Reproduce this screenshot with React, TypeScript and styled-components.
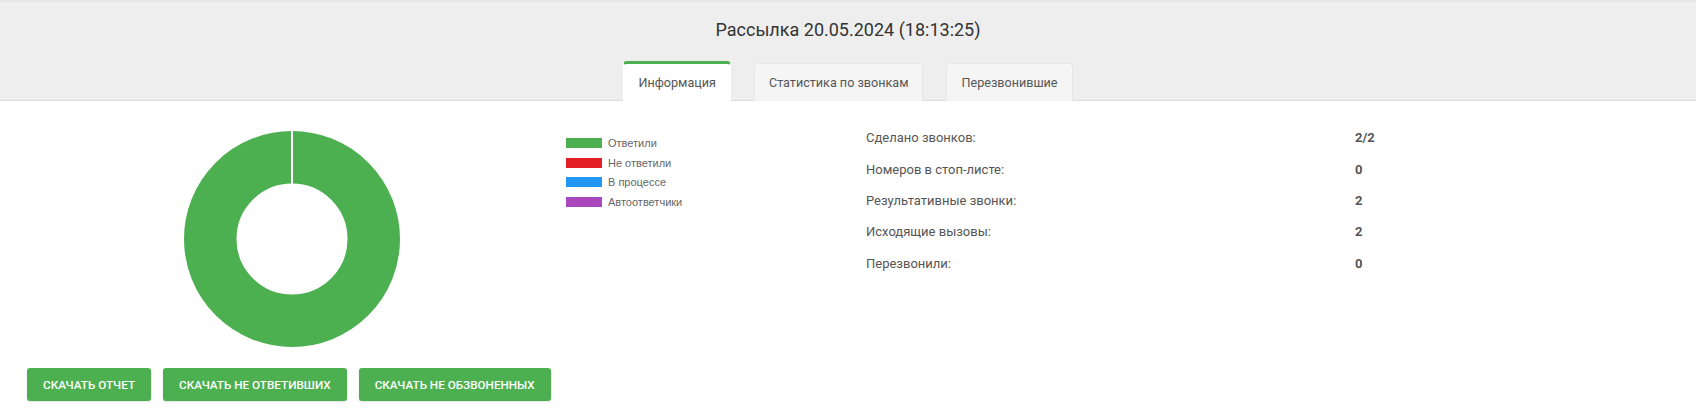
import React from "react";
import styled, { createGlobalStyle } from "styled-components";

const GlobalStyle = createGlobalStyle`
  html, body { margin: 0; padding: 0; background: #ffffff; }
  body { font-family: Roboto, "Noto Sans", Arial, sans-serif; color: #333; }
  * { box-sizing: border-box; }
`;

const Page = styled.div`
  width: 1696px;
  min-height: 410px;
  background: #fff;
`;

const Header = styled.header`
  background: #eeeeee;
  border-top: 2px solid #e6e6e6;
  border-bottom: 1px solid #dddddd;
  padding-top: 16px;
  display: flex;
  flex-direction: column;
  align-items: center;
`;

const Title = styled.h1`
  margin: 0;
  font-family: Roboto, Arial, sans-serif;
  font-weight: 400;
  font-size: 18px;
  line-height: 24px;
  color: #333;
`;

const Tabs = styled.nav`
  display: flex;
  align-items: flex-end;
  gap: 23px;
  margin-top: 19px;
  margin-bottom: -1px;
`;

const Tab = styled.div<{ $active?: boolean }>`
  height: ${(p) => (p.$active ? "40px" : "38px")};
  padding: 0 14px;
  display: flex;
  align-items: center;
  justify-content: center;
  font-size: 12.6px;
  color: #555;
  border-radius: 4px 4px 0 0;
  background: ${(p) => (p.$active ? "#ffffff" : "#f5f5f5")};
  border: 1px solid ${(p) => (p.$active ? "#ffffff" : "#e6e6e6")};
  border-bottom: none;
  border-top: ${(p) => (p.$active ? "3px solid #4caf50" : "1px solid #e6e6e6")};
`;

const Content = styled.main`
  display: flex;
  flex-direction: column;
`;

const Row = styled.section`
  display: flex;
  align-items: flex-start;
`;

const ChartCol = styled.div`
  width: 566px;
  padding: 30px 0 1px 184px;
`;

const LegendCol = styled.ul`
  width: 300px;
  margin: 0;
  padding: 37px 0 0 0;
  list-style: none;
`;

const LegendItem = styled.li`
  display: flex;
  align-items: flex-start;
  height: 19.6px;
  font-family: "Liberation Sans", Arial, sans-serif;
  font-size: 11px;
  line-height: 11px;
  color: #666;
`;

const Swatch = styled.span<{ $color: string }>`
  width: 36px;
  height: 10px;
  background: ${(p) => p.$color};
  margin-right: 6px;
  flex: none;
`;

const StatsCol = styled.dl`
  margin: 0;
  padding: 21px 0 0 0;
  width: 600px;
`;

const StatRow = styled.div`
  display: flex;
  align-items: center;
  height: 31.4px;
  font-size: 13px;
  color: #555;
`;

const StatLabel = styled.dt`
  width: 489px;
`;

const StatValue = styled.dd`
  margin: 0;
  font-weight: 700;
`;

const Buttons = styled.div`
  display: flex;
  gap: 12px;
  padding-left: 27px;
  margin-top: 16px;
`;

const Button = styled.button`
  height: 33px;
  padding: 0 16px;
  border: none;
  border-radius: 3px;
  background: #4caf50;
  color: #fff;
  font-family: Roboto, Arial, sans-serif;
  font-weight: 500;
  font-size: 11.7px;
  text-transform: uppercase;
  box-shadow: 0 1px 2px rgba(0, 0, 0, 0.12);
  cursor: pointer;
`;

const Donut = () => (
  <svg width="216" height="216" viewBox="0 0 216 216">
    <circle cx="108" cy="108" r="81.75" fill="none" stroke="#4caf50" strokeWidth="52.5" />
    <rect x="107" y="0" width="2" height="54" fill="#ffffff" />
  </svg>
);

const legend = [
  { label: "Ответили", color: "#4caf50" },
  { label: "Не ответили", color: "#e31e24" },
  { label: "В процессе", color: "#2196f3" },
  { label: "Автоответчики", color: "#ab47bc" },
];

const stats = [
  { label: "Сделано звонков:", value: "2/2" },
  { label: "Номеров в стоп-листе:", value: "0" },
  { label: "Результативные звонки:", value: "2" },
  { label: "Исходящие вызовы:", value: "2" },
  { label: "Перезвонили:", value: "0" },
];

export default function App() {
  return (
    <Page>
      <GlobalStyle />
      <Header>
        <Title>Рассылка 20.05.2024 (18:13:25)</Title>
        <Tabs>
          <Tab $active>Информация</Tab>
          <Tab>Статистика по звонкам</Tab>
          <Tab>Перезвонившие</Tab>
        </Tabs>
      </Header>
      <Content>
        <Row>
          <ChartCol>
            <Donut />
          </ChartCol>
          <LegendCol>
            {legend.map((l) => (
              <LegendItem key={l.label}>
                <Swatch $color={l.color} />
                {l.label}
              </LegendItem>
            ))}
          </LegendCol>
          <StatsCol>
            {stats.map((s) => (
              <StatRow key={s.label}>
                <StatLabel>{s.label}</StatLabel>
                <StatValue>{s.value}</StatValue>
              </StatRow>
            ))}
          </StatsCol>
        </Row>
        <Buttons>
          <Button>Скачать отчет</Button>
          <Button>Скачать не ответивших</Button>
          <Button>Скачать не обзвоненных</Button>
        </Buttons>
      </Content>
    </Page>
  );
}
